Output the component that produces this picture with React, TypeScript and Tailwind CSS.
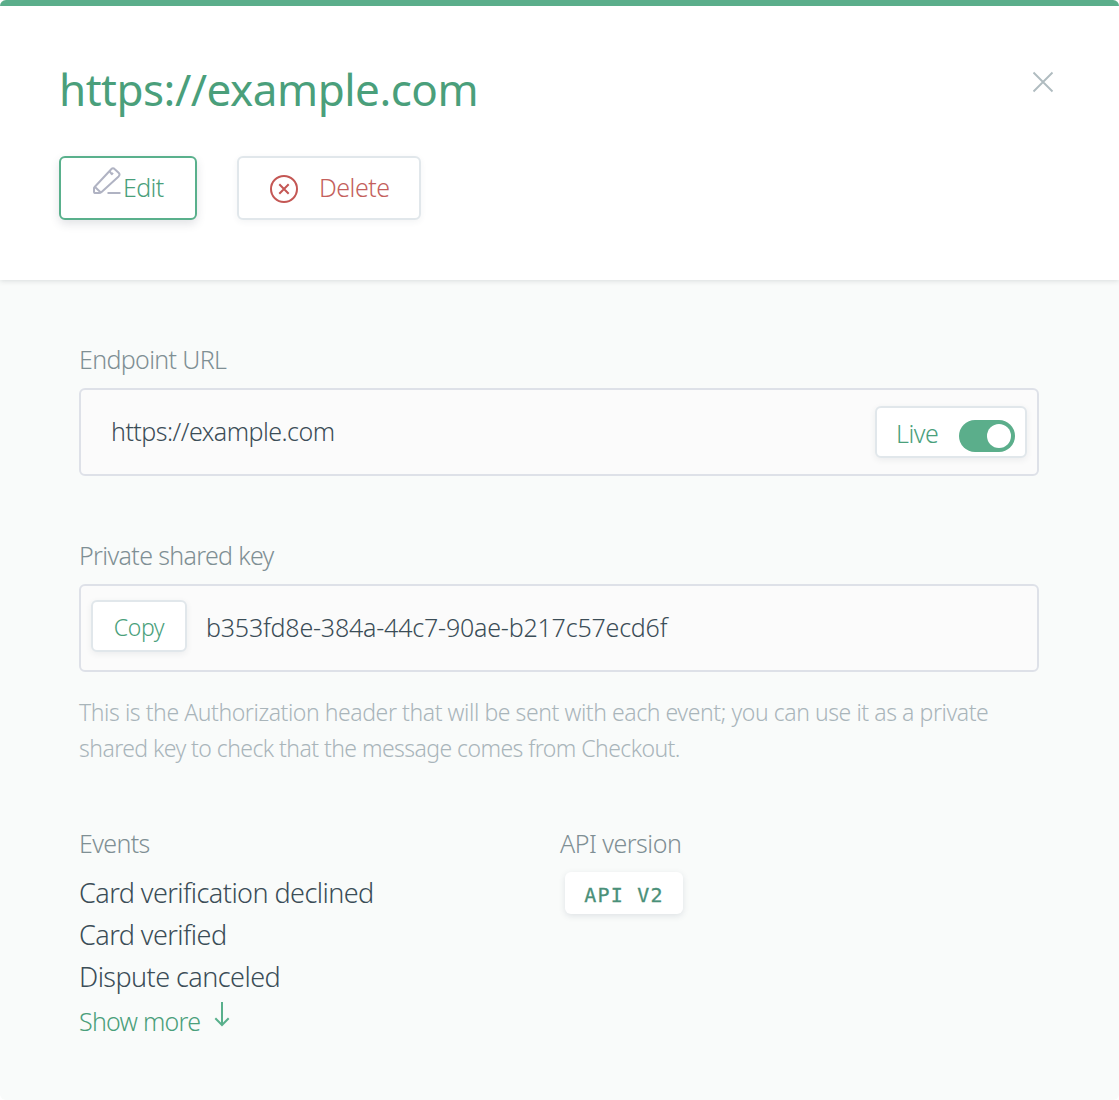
import type { ReactNode } from 'react';

function CloseIcon() {
  return (
    <svg width="22" height="22" viewBox="0 0 22 22" fill="none" stroke="#b0bcc0" strokeWidth="1.9">
      <path d="M1.5 1.5L20.5 20.5M20.5 1.5L1.5 20.5" />
    </svg>
  );
}

function PencilIcon() {
  return (
    <svg width="30" height="30" viewBox="0 0 30 30" fill="none" stroke="#b0b3c3" strokeWidth="2" strokeLinejoin="round">
      <path d="M2.4 21.2L19.2 3.2Q21 1.4 22.8 3.2L26.6 6.8Q28.4 8.6 26.6 10.4L9.6 26Q8.4 27 7 27H3.6Q2 27 2 25.4V22.4Q2 21.6 2.4 21.2Z" />
      <path d="M3 21L8.8 26.4M17.6 5.4L19.8 8.2L21 6.8" />
      <path d="M15.5 27H28.5" />
    </svg>
  );
}

function CircleCrossIcon() {
  return (
    <svg width="28" height="28" viewBox="0 0 28 28" fill="none" stroke="#c45754" strokeWidth="2">
      <circle cx="14" cy="14" r="13" />
      <path d="M9.3 9.3L18.7 18.7M18.7 9.3L9.3 18.7" />
    </svg>
  );
}

function ArrowDownIcon() {
  return (
    <svg width="16" height="26" viewBox="0 0 16 26" fill="none" stroke="#59b08c" strokeWidth="2">
      <path d="M8 1V24M1.3 17.2L8 24L14.7 17.2" />
    </svg>
  );
}

function Label({ children }: { children: ReactNode }) {
  return <div className="h-9 text-[25px] leading-[38px] tracking-[-0.65px] text-[#7f8f94]">{children}</div>;
}

const events = ['Card verification declined', 'Card verified', 'Dispute canceled'];

export default function App() {
  return (
    <div className="h-[1100px] w-full overflow-hidden whitespace-nowrap rounded-[6px] bg-[#f9fbfa] font-['Noto_Sans',sans-serif] font-light">
      <header className="flex h-[280px] items-start justify-between border-t-[6px] border-[#5bae8b] bg-white pr-[65px] pl-[59px] shadow-[0_1px_5px_rgba(50,60,70,0.16)]">
        <div className="pt-[53px]">
          <h1 className="h-[60px] text-[44px] leading-[60px] font-normal tracking-[-0.5px] text-[#4a9f7b]">https://example.com</h1>
          <div className="mt-[37px] flex gap-10">
            <button className="flex h-16 w-[138px] rounded-[6px] border-2 border-[#59b08c] bg-white pl-[31px] text-[25px] tracking-[-0.6px] text-[#4a9f7b] shadow-[0_4px_10px_rgba(50,60,80,0.14)]">
              <span className="mt-[8px] w-[31px] shrink-0"><PencilIcon /></span>
              <span className="leading-[58px]">Edit</span>
            </button>
            <button className="flex h-16 w-[184px] rounded-[6px] border-2 border-[#e1e7eb] bg-white pl-[31px] text-[25px] tracking-[-0.5px] text-[#c45f5c] shadow-[0_2px_6px_rgba(50,60,80,0.06)]">
              <span className="mt-[17px] mr-[21px] shrink-0"><CircleCrossIcon /></span>
              <span className="leading-[58px]">Delete</span>
            </button>
          </div>
        </div>
        <button aria-label="Close" className="mt-[65px]"><CloseIcon /></button>
      </header>

      <main className="pt-[60px] pr-20 pl-[79px]">
        <Label>Endpoint URL</Label>
        <div className="mt-3 flex h-[88px] items-start justify-between rounded-[6px] border-2 border-[#dee1e8] bg-[#fbfbfb] pr-[10px] pl-[30px]">
          <span className="text-[25px] leading-[82px] tracking-[-0.52px] text-[#3b4d57]">https://example.com</span>
          <div className="mt-4 flex h-[52px] w-[152px] justify-between rounded-[6px] border-2 border-[#e1e7eb] bg-white pr-[10px] pl-[19px] shadow-[0_2px_6px_rgba(50,60,80,0.08)]">
            <span className="text-[25px] leading-[50px] tracking-[-0.5px] text-[#4a9f7b]">Live</span>
            <span className="mt-3 flex h-8 w-14 items-center justify-end rounded-full bg-[#5bae8b] pr-1">
              <span className="size-6 rounded-full bg-white" />
            </span>
          </div>
        </div>

        <div className="mt-[60px]"><Label>Private shared key</Label></div>
        <div className="mt-3 flex h-[88px] items-start rounded-[6px] border-2 border-[#dee1e8] bg-[#fbfbfb] pl-[10px]">
          <button className="mt-[14px] h-[52px] w-24 rounded-[6px] border-2 border-[#e1e7eb] bg-white pt-[3px] text-[23px] leading-[45px] tracking-[-0.4px] text-[#4a9f7b] shadow-[0_2px_6px_rgba(50,60,80,0.08)]">Copy</button>
          <span className="ml-[19px] text-[25px] leading-[82px] tracking-[-0.2px] text-[#3b4d57]">b353fd8e-384a-44c7-90ae-b217c57ecd6f</span>
        </div>

        <p className="mt-[22px] text-[23px] leading-9 text-[#a9b5ba]">
          <span className="tracking-[-0.43px]">This is the Authorization header that will be sent with each event; you can use it as a private</span>
          <br />
          <span className="tracking-[-0.56px]">shared key to check that the message comes from Checkout.</span>
        </p>

        <div className="mt-[58px] grid grid-cols-2">
          <section>
            <Label>Events</Label>
            <ul className="mt-[12px] text-[27px] leading-[42px] tracking-[-0.56px] text-[#3b4d57]">
              {events.map((event) => <li key={event}>{event}</li>)}
            </ul>
            <button className="mt-[3px] flex h-10 items-start text-[25px] tracking-[-0.75px] text-[#4a9f7b]">
              <span className="leading-[40px]">Show more</span>
              <span className="ml-[14px]"><ArrowDownIcon /></span>
            </button>
          </section>
          <section className="pl-px">
            <Label><span className="tracking-[-0.5px]">API version</span></Label>
            <span className="mt-[12px] ml-[5px] flex h-[42px] w-[118px] items-center justify-center rounded-[6px] bg-white pt-[4px] font-['DejaVu_Sans_Mono',monospace] text-[20px] font-normal tracking-[1.2px] text-[#4a9079] shadow-[0_2px_6px_rgba(50,60,90,0.13)] [-webkit-text-stroke:0.3px_#4a9079]">API V2</span>
          </section>
        </div>
      </main>
    </div>
  );
}
